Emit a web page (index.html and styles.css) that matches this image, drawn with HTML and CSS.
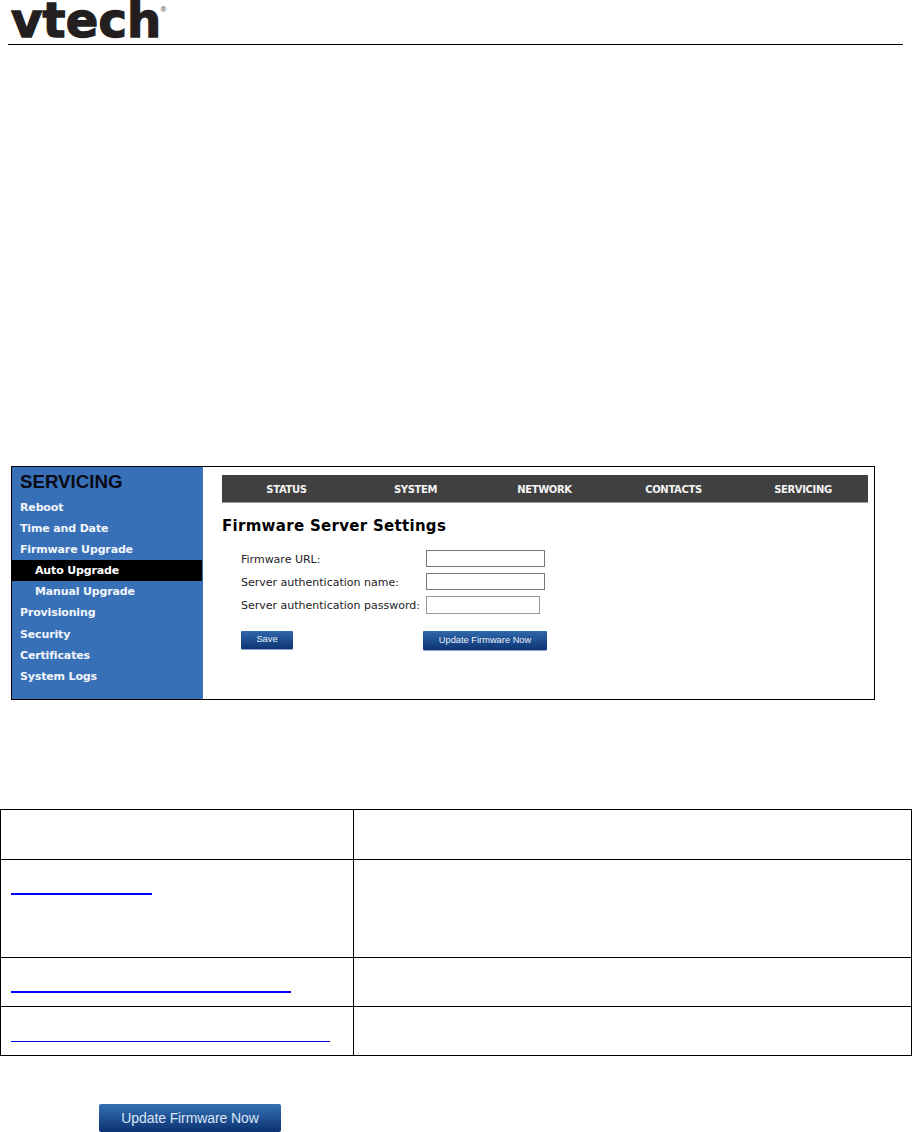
FILE: index.html
```html
<!DOCTYPE html>
<html lang="en">
<head>
<meta charset="utf-8">
<title>Firmware Server Settings</title>
<link rel="stylesheet" href="styles.css">
</head>
<body>
<header class="doc-header">
  <div class="logo">vtech<sup class="reg">®</sup></div>
</header>
<figure class="shot">
  <aside class="side">
    <h2 class="side-title">SERVICING</h2>
    <ul class="menu">
      <li>Reboot</li>
      <li>Time and Date</li>
      <li>Firmware Upgrade</li>
      <li class="sub active">Auto Upgrade</li>
      <li class="sub">Manual Upgrade</li>
      <li>Provisioning</li>
      <li>Security</li>
      <li>Certificates</li>
      <li>System Logs</li>
    </ul>
  </aside>
  <section class="main">
    <nav class="tabs">
      <span>STATUS</span><span>SYSTEM</span><span>NETWORK</span><span>CONTACTS</span><span>SERVICING</span>
    </nav>
    <h1 class="title">Firmware Server Settings</h1>
    <div class="form">
      <label class="lbl">Firmware URL:</label><span class="inp"></span>
      <label class="lbl">Server authentication name:</label><span class="inp"></span>
      <label class="lbl">Server authentication password:</label><span class="inp short"></span>
    </div>
    <div class="actions">
      <span class="btn save">Save</span>
      <span class="btn update">Update Firmware Now</span>
    </div>
  </section>
</figure>
<table class="params">
  <tr class="r1"><td class="c1"></td><td></td></tr>
  <tr class="r2"><td class="c1"><div class="lnk w1"></div></td><td></td></tr>
  <tr class="r3"><td class="c1"><div class="lnk w2"></div></td><td></td></tr>
  <tr class="r4"><td class="c1"><div class="lnk w3"></div></td><td></td></tr>
</table>
<div class="bottom">
  <span class="big-btn">Update Firmware Now</span>
</div>
</body>
</html>
```
FILE: styles.css
```css
* { box-sizing: border-box; }
html, body { margin: 0; padding: 0; background: #fff; }
body { width: 914px; height: 1132px; overflow: hidden; font-family: "DejaVu Sans", sans-serif; color: #000; }

.doc-header { margin: 0 11px 0 8px; height: 45px; border-bottom: 1px solid #000; padding: 2px 0 0 3px; }
.logo { font: 700 48px/36px "DejaVu Sans", sans-serif; color: #231f20; letter-spacing: 0.2px; height: 42px; -webkit-text-stroke: 1.4px #231f20; }
.reg { font: 400 8px/8px "Liberation Sans", sans-serif; color: #333; letter-spacing: 0; vertical-align: 25px; margin-left: -1px; -webkit-text-stroke: 0; }

.shot { margin: 421px 0 0 11px; width: 864px; height: 234px; border: 1px solid #000; display: flex; }
.side { width: 191px; background: #3870b8; flex: none; padding-top: 4px; }
.side-title { margin: 0 0 0 8px; font: 700 18.7px/21px "Liberation Sans", sans-serif; color: #0a0a14; }
.menu { list-style: none; margin: 5px 1px 0 0; padding: 0; }
.menu li { height: 21.1px; padding-left: 8px; font: 700 11px/21px "DejaVu Sans", sans-serif; letter-spacing: -0.15px; color: #f2f6fb; white-space: nowrap; }
.menu .sub { padding-left: 23px; }
.menu .active { background: #000; color: #fff; line-height: 22px; }

.main { flex: 1; padding: 8px 6px 0 19px; }
.tabs { height: 28px; background: #404040; border-bottom: 1px solid #999; display: grid; grid-template-columns: 129px 129px 129px 129px 130px; }
.tabs span { text-align: center; font: 700 10px/29px "DejaVu Sans", sans-serif; letter-spacing: -0.35px; color: #f4f4f4; }
.title { margin: 14px 0 0; font: 700 15px/18px "DejaVu Sans", sans-serif; letter-spacing: 0.3px; color: #000; }

.form { margin: 16px 0 0 19px; display: grid; grid-template-columns: 185px 119px; grid-auto-rows: 23px; align-items: start; }
.lbl { font: 400 11px/17px "DejaVu Sans", sans-serif; color: #222; white-space: nowrap; }
.inp { height: 17px; margin-top: -1px; border: 1px solid #777; background: #fff; display: block; }
.inp.short { width: 114px; border-color: #999; height: 18px; }

.actions { margin-top: 11px; display: flex; align-items: flex-start; padding-left: 19px; }
.btn { display: block; text-align: center; color: #eaf1fa; font: 400 9.3px/16px "Liberation Sans", sans-serif; background: linear-gradient(#2f68ab, #0d3474); border-radius: 1px; box-shadow: 0 1px 0 #8ea6c6; }
.save { width: 52px; height: 18px; }
.update { width: 124px; height: 19px; margin-left: 130px; line-height: 18px; }

.params { margin: 109px 0 0 0; width: 912px; height: 247px; border-collapse: collapse; table-layout: fixed; }
.params td { border: 1px solid #000; padding: 0 10px; vertical-align: top; }
.params .c1 { width: 353px; }
.r1 { height: 50px; }
.r2 { height: 98px; }
.r3 { height: 49px; }
.r4 { height: 49px; }
.lnk { border-bottom: 2px solid #0000ff; }
.r2 .lnk { margin-top: 33px; }
.r3 .lnk { margin-top: 33px; }
.r4 .lnk { margin-top: 34px; border-bottom-width: 1px; border-bottom-color: #0000e0; }
.w1 { width: 141px; }
.w2 { width: 280px; }
.w3 { width: 319px; }

.bottom { margin: 48px 0 0 99px; }
.big-btn { display: block; width: 182px; height: 28px; text-align: center; color: #d8e6f6; font: 400 14px/28px "Liberation Sans", sans-serif; letter-spacing: -0.1px; background: linear-gradient(#3570b3, #0b3272); border-radius: 2px; }
```
